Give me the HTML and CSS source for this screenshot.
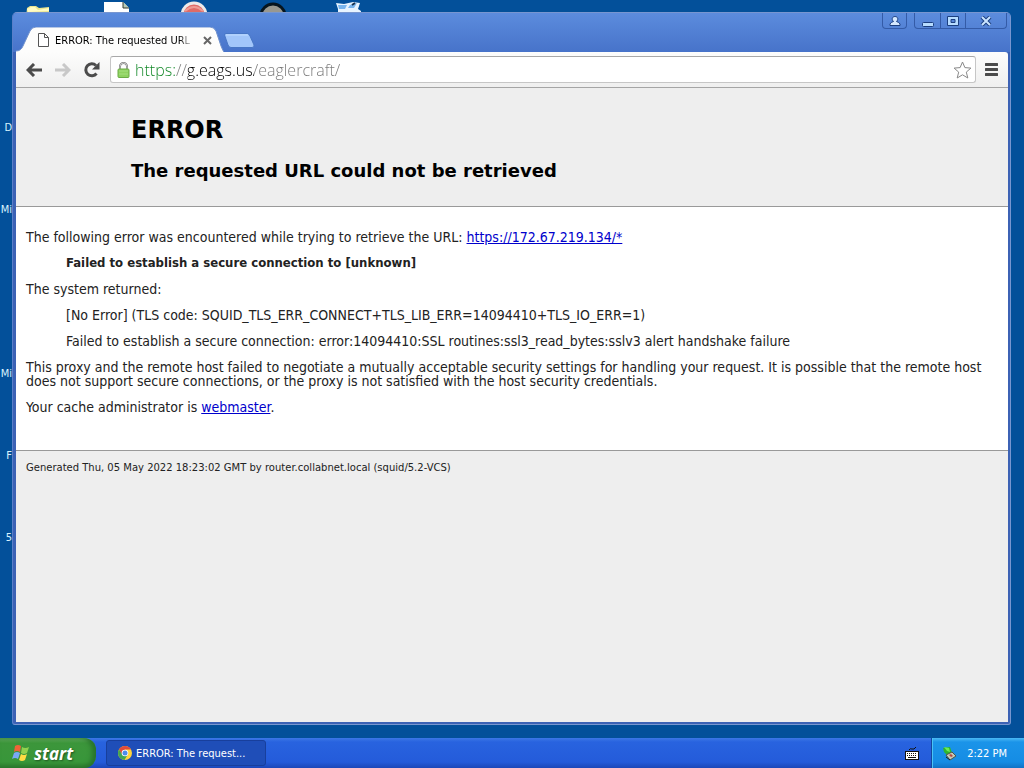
FILE: index.html
```html
<!DOCTYPE html>
<html lang="en">

<head>
    <meta charset="utf-8">
    <title>ERROR: The requested URL could not be retrieved</title>
    <link rel="stylesheet" href="styles.css">
</head>

<body>
    <main class="desktop">
        <!-- desktop icons, mostly covered by the window -->
        <svg class="shortcut folder" width="26" height="12" viewBox="0 0 26 12"><path d="M1 2l3-2h6l3 2 10-1v11H0z" fill="#e9e58f"/><path d="M1 3l4-2h4l3 3 11-2v3L2 6z" fill="#fffcc4"/></svg>
        <svg class="shortcut paper" width="26" height="12" viewBox="0 0 26 12"><path d="M0 1h19l6 6v5H0z" fill="#fff"/><path d="M19 1v6h6" fill="#b9cbb5" stroke="#343a32"/></svg>
        <svg class="shortcut disc" width="28" height="12" viewBox="0 0 28 12"><circle cx="14" cy="14" r="12" fill="#df6b67" stroke="#ece9e9" stroke-width="3"/><path d="M5 10q9-8 18 0" fill="none" stroke="#ee9b94" stroke-width="2"/></svg>
        <svg class="shortcut dial" width="28" height="12" viewBox="0 0 28 12"><circle cx="14" cy="15" r="12" fill="#99988f" stroke="#07151e" stroke-width="3"/></svg>
        <svg class="shortcut tools" width="28" height="12" viewBox="0 0 28 12"><path d="M1 2l8 1 9-2 7 1-2 6 3 2v2H3V8z" fill="#e8f4ff"/><path d="M3 4h9l-2 4H4zM15 4l7-2-3 5h-6z" fill="#79b5ee"/><path d="M17 4l3-2" stroke="#16304d" stroke-width="2"/></svg>
        <span class="shortcut-label docs">D</span>
        <span class="shortcut-label media">Mi</span>
        <span class="shortcut-label micro">Mi</span>
        <span class="shortcut-label fire">F</span>
        <span class="shortcut-label five">5</span>

        <section class="window">
            <header class="titlebar">
                <div class="tabs">
                    <div class="tab">
                        <svg class="tab-shape" width="208" height="25" viewBox="0 0 208 25"><path d="M0 25V24Q5 24 7 19L14 4Q16 0 20 0H194Q198 0 200 4L205 19Q207 24 208 25z" fill="#fdfdfc"/><path d="M0 24Q5 24 7 19L14 4Q16 0 20 0H194Q198 0 200 4L205 19Q207 24 208 25" fill="none" stroke="#7192cd"/></svg>
                        <svg width="11" height="14" viewBox="0 0 11 14"><path d="M.5 .5h6l4 4v9H.5zM6.500 .5v4h4" fill="#fff" stroke="#555"/></svg>
                        <span class="tab-title">ERROR: The requested URL</span>
                        <button class="tab-close" aria-label="Close tab"><svg width="9" height="9" viewBox="0 0 9 9"><path d="M1 1l7 7M8 1L1 8" stroke="#666" stroke-width="2"/></svg></button>
                    </div>
                    <button class="new-tab" aria-label="New tab"><svg width="31" height="15" viewBox="0 0 31 15"><path d="M2 .5H23Q25 .5 26 3L30 12Q30.500 14.500 28 14.500H7Q5 14.500 4 12L.5 2Q.5 .5 2 .5z" fill="#a2c6fa" stroke="#4776c5"/><path d="M2 2h22" stroke="#c0dcff"/></svg></button>
                </div>
                <div class="window-buttons">
                    <button class="user" aria-label="User"><svg width="12" height="10" viewBox="0 0 12 10"><path d="M1 9.500V8q1-2 3.500-2.500C2 3 3.500.5 6 .5S10 3 7.500 5.500Q10 6 11 8v1.500z" fill="#d5e8ff" stroke="#1c3f80"/></svg></button>
                    <div class="button-group">
                        <button class="minimize" aria-label="Minimize"><svg width="12" height="11" viewBox="0 0 12 11"><rect x=".5" y="6.500" width="11" height="4" rx="1" fill="#b7dcff" stroke="#1c3f80"/></svg></button>
                        <button class="restore" aria-label="Restore"><svg width="12" height="10" viewBox="0 0 12 10"><path d="M.5 .5h11v9H.5zM4 3.500v3h4v-3z" fill="#b7dcff" fill-rule="evenodd" stroke="#1c3f80"/></svg></button>
                        <button class="close" aria-label="Close"><svg width="12" height="10" viewBox="0 0 12 10"><path d="M2 1l8 8M10 1L2 9" stroke="#1c3f80" stroke-width="4"/><path d="M2 1l8 8M10 1L2 9" stroke="#c9e4ff" stroke-width="2"/></svg></button>
                    </div>
                </div>
            </header>

            <nav class="toolbar">
                <button class="nav-button" aria-label="Back"><svg width="16" height="14" viewBox="0 0 16 14"><path d="M8 1L2 7l6 6M2 7h14" fill="none" stroke="#4b4b4b" stroke-width="3"/></svg></button>
                <button class="nav-button" aria-label="Forward" disabled><svg width="16" height="14" viewBox="0 0 16 14"><path d="M8 1l6 6-6 6M14 7H0" fill="none" stroke="#c8c8c8" stroke-width="3"/></svg></button>
                <button class="nav-button" aria-label="Reload"><svg width="16" height="16" viewBox="0 0 16 16"><path d="M12.500 11.500A6 6 0 1 1 12 3.500" fill="none" stroke="#4b4b4b" stroke-width="3"/><path d="M15.500 0v7.500H8z" fill="#4b4b4b"/></svg></button>
                <form class="omnibox">
                    <svg width="13" height="16" viewBox="0 0 13 16"><path d="M3 8V4.500a3.500 3.500 0 0 1 7 0V8" fill="none" stroke="#777" stroke-width="2"/><path d="M3 8V4.500a3.500 3.500 0 0 1 7 0V8" fill="none" stroke="#ccc"/><rect x="1" y="7" width="11" height="8.500" rx="1" fill="#8fd260" stroke="#6aab45"/><path d="M2 9h9M2 12h9" stroke="#a5df7e"/></svg>
                    <input class="address" type="text" aria-label="Address" value="https://g.eags.us/eaglercraft/" spellcheck="false">
                    <button class="bookmark" type="button" aria-label="Bookmark this page"><svg width="19" height="18" viewBox="0 0 19 18"><path d="M9.500 1l2.400 5.600 6 .5-4.600 4 1.500 5.900-5.300-3.200L4.200 17l1.500-5.900-4.600-4 6-.5z" fill="#fff" stroke="#888" stroke-linejoin="round"/></svg></button>
                </form>
                <button class="menu" aria-label="Menu"><svg width="13" height="13" viewBox="0 0 13 13"><path d="M1 1.500h11M1 6.500h11M1 11.500h11" stroke="#4b4b4b" stroke-width="3" stroke-linecap="round"/></svg></button>
            </nav>

            <article class="page">
                <div class="page-titles">
                    <h1>ERROR</h1>
                    <h2>The requested URL could not be retrieved</h2>
                </div>
                <div class="page-content">
                    <p>The following error was encountered while trying to retrieve the URL: <a href="https://172.67.219.134/*">https://172.67.219.134/*</a></p>
                    <blockquote><b>Failed to establish a secure connection to [unknown]</b></blockquote>
                    <p>The system returned:</p>
                    <blockquote>
                        <p>[No Error] (TLS code: SQUID_TLS_ERR_CONNECT+TLS_LIB_ERR=14094410+TLS_IO_ERR=1)</p>
                        <p>Failed to establish a secure connection: error:14094410:SSL routines:ssl3_read_bytes:sslv3 alert handshake failure</p>
                    </blockquote>
                    <p>This proxy and the remote host failed to negotiate a mutually acceptable security settings for handling your request. It is possible that the remote host does not support secure connections, or the proxy is not satisfied with the host security credentials.</p>
                    <p>Your cache administrator is <a href="mailto:webmaster">webmaster</a>.</p>
                </div>
                <p class="page-footer">Generated Thu, 05 May 2022 18:23:02 GMT by router.collabnet.local (squid/5.2-VCS)</p>
            </article>
        </section>
    </main>

    <footer class="taskbar">
        <button class="start">
            <svg width="20" height="18" viewBox="0 0 20 18"><path d="M4 2q3-2 6 0L9 8Q6 6 3 8z" fill="#ee6338"/><path d="M11 3q3 2 7 0l-2 6q-3 2-6 0z" fill="#90d14e"/><path d="M3 9q3-2 6 0l-2 6q-3-2-6 0z" fill="#79a8f6"/><path d="M10 10q3 2 6 0l-2 6q-3 2-6 0z" fill="#ffdc43"/></svg>
            start
        </button>
        <button class="task">
            <svg width="14" height="14" viewBox="0 0 14 14"><circle cx="7" cy="7" r="7" fill="#ffd43b"/><path d="M1 3.500A7 7 0 0 1 13.100 3.500H7L4 9z" fill="#e04b3c"/><path d="M1 3.500A7 7 0 0 0 6.500 14L9.500 9H4.500z" fill="#42a653"/><circle cx="7" cy="7" r="3.300" fill="#fff"/><circle cx="7" cy="7" r="2.500" fill="#4c8cea"/></svg>
            ERROR: The request...
        </button>
        <svg class="keyboard" width="14" height="13" viewBox="0 0 14 13"><path d="M4 3q1-2 3-1t4-2" fill="none" stroke="#111"/><rect x=".5" y="4.500" width="13" height="8" fill="#fff" stroke="#111"/><path d="M2 6.500h10M2 8.500h10" stroke="#111" stroke-dasharray="1 1"/><path d="M3 10.500h8" stroke="#111"/></svg>
        <div class="tray">
            <svg width="15" height="15" viewBox="0 0 15 15"><path d="M1 2l7-1 2 6-5 2-3-3z" fill="#2eb52d"/><path d="M2 1l5 1 1 4-3-1z" fill="#6bec55"/><path d="M4 9l6-3 4 4-6 4z" fill="#c5cbb7" stroke="#4c5749"/><path d="M7 9l2-1 2 2-2 1z" fill="#b34945"/><path d="M4 11l4 3" stroke="#222"/></svg>
            <time>2:22 PM</time>
        </div>
    </footer>
</body>

</html>
```
FILE: styles.css
```css
* {
    box-sizing: border-box;
    margin: 0;
    padding: 0;
}

body {
    display: flex;
    flex-direction: column;
    min-height: 100vh;
    background-color: #03509a;
    font-family: "DejaVu Sans Condensed", "DejaVu Sans", sans-serif;
    font-size: 11px;
}

button {
    display: flex;
    align-items: center;
    justify-content: center;
    border: 0 none;
    background: none;
    font: inherit;
}

svg {
    display: block;
    flex-shrink: 0;
}

.desktop {
    position: relative;
    display: flex;
    flex-grow: 1;
    padding: 12px 13px 13px 12px;
}

/* things lying on the desktop */
.shortcut {
    position: absolute;
    top: 1px;
}

.folder { left: 26px; top: 6px; }
.paper { left: 104px; }
.disc { left: 180px; }
.dial { left: 259px; }
.tools { left: 335px; }

.shortcut-label {
    position: absolute;
    right: calc(100% - 12px);
    color: #d9f3ff;
    line-height: 14px;
}

.docs { top: 121px; }
.media { top: 203px; }
.micro { top: 367px; }
.fire { top: 449px; }
.five { top: 531px; }

.window {
    position: relative;
    display: flex;
    flex-direction: column;
    flex-grow: 1;
    padding: 0 2px 2px 3px;
    border: 1px solid #7896d0;
    border-left-color: #5a7fc8;
    border-radius: 5px 5px 3px 3px;
    background-color: #3c62b5;
}

.titlebar {
    display: flex;
    justify-content: space-between;
    height: 39px;
    margin: 0 -2px 0 -3px;
    padding: 0 3px;
    border-radius: 4px 4px 0 0;
    background: linear-gradient(#5c8cdd, #4773ca);
}

.tabs {
    display: flex;
    align-items: flex-end;
}

.tab {
    position: relative;
    display: flex;
    align-items: center;
    width: 208px;
    height: 25px;
    padding: 1px 8px 0 22px;
    gap: 6px;
}

.tab svg,
.tab span {
    z-index: 1;
}

.tab .tab-shape {
    position: absolute;
    left: 0;
    bottom: 0;
    z-index: 0;
}

.tab-title {
    flex-grow: 1;
    overflow: hidden;
    white-space: nowrap;
    mask-image: linear-gradient(to right, #000 90%, transparent);
}

.tab-close {
    z-index: 1;
    width: 17px;
    height: 17px;
}

.new-tab {
    height: 15px;
    margin-bottom: 4px;
}

.window-buttons {
    display: flex;
    gap: 7px;
}

.window-buttons button {
    height: 16px;
    width: 25px;
}

.window-buttons .user {
    border: 1px solid #345ba7;
    border-top: 0;
    border-radius: 0 0 4px 4px;
}

.button-group {
    display: flex;
    height: 16px;
    border: 1px solid #345ba7;
    border-top: 0;
    border-radius: 0 0 4px 4px;
}

.button-group button + button {
    border-left: 1px solid #345ba7;
}

.window-buttons .close {
    width: 41px;
}

.toolbar {
    display: flex;
    align-items: center;
    height: 36px;
    padding: 0 8px 0 3px;
    border-bottom: 1px solid #a5a5a5;
    border-radius: 0 3px 0 0;
    background: linear-gradient(#fdfdfc, #efefef);
}

.nav-button {
    width: 29px;
    height: 28px;
}

.omnibox {
    display: flex;
    align-items: center;
    flex-grow: 1;
    height: 27px;
    margin-left: 4px;
    padding: 0 3px 0 6px;
    gap: 5px;
    border: 1px solid #c6c6c6;
    border-top-color: #a8a8a8;
    border-radius: 3px;
    background-color: #fff;
}

.address {
    flex-grow: 1;
    min-width: 0;
    border: 0 none;
    outline: 0 none;
    /* green scheme, black host, grey path */
    background: linear-gradient(to right, #0a8420 40px, #777 40px, #777 53px, #000 53px, #000 119px, #777 119px);
    background-clip: text;
    -webkit-background-clip: text;
    color: transparent;
    font-family: "Open Sans", "Noto Sans", sans-serif;
    font-size: 16px;
    font-weight: 300;
    line-height: 22px;
}

.menu {
    width: 17px;
    height: 28px;
    margin-left: 7px;
}

.page {
    flex-grow: 1;
    background-color: #eee;
    color: #222;
    font-size: 14px;
    line-height: 14px;
}

.page-titles {
    padding: 27px 10px 24px 115px;
    color: #000;
    font-family: "DejaVu Sans", sans-serif;
}

.page-titles h1 {
    font-size: 24px;
    line-height: 30px;
}

.page-titles h2 {
    margin-top: 15px;
    font-size: 18px;
    line-height: 22px;
}

.page-content {
    padding: 11px 10px 24px;
    border-top: 1px solid #999;
    border-bottom: 1px solid #999;
    background-color: #fff;
}

.page-content p,
.page-content blockquote {
    margin: 12px 0;
}

.page-content blockquote {
    margin-left: 40px;
}

.page-content b {
    display: block;
    font-size: 13px;
}

.page-content a {
    color: #0000cc;
}

.page-footer {
    padding: 10px;
    font-family: "DejaVu Sans", sans-serif;
    font-size: 10px;
}

.taskbar {
    display: flex;
    align-items: center;
    height: 30px;
    background: linear-gradient(#3c77e6, #2863df 4px, #245bda 24px, #1c47b8);
    color: #fff;
}

.start {
    width: 96px;
    height: 30px;
    gap: 3px;
    padding-right: 12px;
    border-radius: 0 12px 12px 0;
    background: linear-gradient(#65ad61, #3c963b 5px, #38963a 24px, #2c7b2e);
    box-shadow: inset -4px 0 5px #28732b;
    color: #fff;
    font-family: "Open Sans", "Noto Sans", sans-serif;
    font-size: 17px;
    font-style: italic;
    font-weight: bold;
    text-shadow: 1px 1px 2px #1f5420;
}

.task {
    justify-content: flex-start;
    width: 160px;
    height: 26px;
    margin-left: 10px;
    padding-left: 11px;
    gap: 4px;
    border: 1px solid #183f9c;
    border-radius: 3px;
    background-color: #1f4eb8;
    color: #fff;
}

.keyboard {
    margin-left: auto;
}

.tray {
    display: flex;
    align-items: center;
    height: 30px;
    margin-left: 12px;
    padding: 0 17px 0 10px;
    gap: 10px;
    border-left: 1px solid #14479e;
    background: linear-gradient(#4bb9f4, #1b94e9 4px, #158ce4 24px, #1172c5);
    box-shadow: inset 1px 0 #4ac4f5;
}
```
